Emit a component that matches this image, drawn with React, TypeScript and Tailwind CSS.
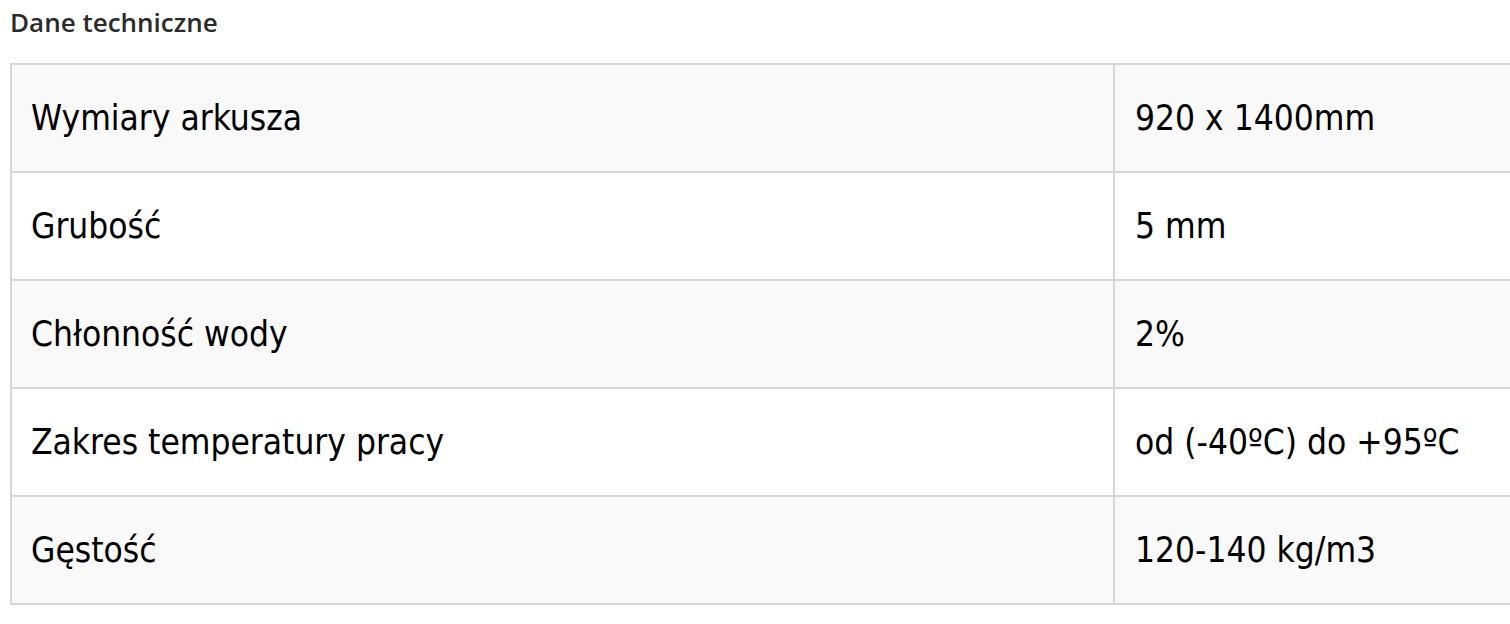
import React from "react";

const rows: [string, string][] = [
  ["Wymiary arkusza", "920 x 1400mm"],
  ["Grubość", "5 mm"],
  ["Chłonność wody", "2%"],
  ["Zakres temperatury pracy", "od (-40ºC) do +95ºC"],
  ["Gęstość", "120-140 kg/m3"],
];

export default function App() {
  return (
    <div className="w-[1510px] h-[624px] overflow-hidden bg-white">
      <div className="pl-[10px] pt-[5px]">
        <h2 className="text-[26px] leading-[34px] font-semibold text-[#2b2b2b] font-['Open_Sans',sans-serif]">
          Dane techniczne
        </h2>
        <table className="mt-[24px] w-[1520px] border-collapse font-['DejaVu_Sans_Condensed','DejaVu_Sans',sans-serif] text-[35px] text-black">
          <tbody>
            {rows.map(([k, v], i) => (
              <tr key={k} className={i % 2 === 0 ? "bg-[#f9f9f9]" : "bg-white"}>
                <td className="w-[1103px] h-[108px] border-2 border-[#d6d6d6] pl-[19px] align-middle">{k}</td>
                <td className="h-[108px] border-2 border-[#d6d6d6] pl-[20px] align-middle">{v}</td>
              </tr>
            ))}
          </tbody>
        </table>
      </div>
    </div>
  );
}
